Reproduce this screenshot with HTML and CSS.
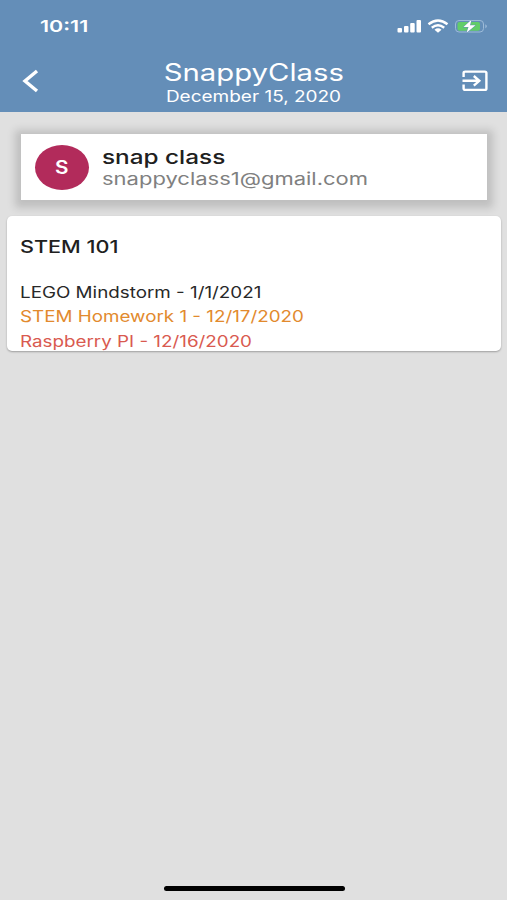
FILE: index.html
```
<!DOCTYPE html>
<html lang="en">
<head>
<meta charset="utf-8">
<title>SnappyClass</title>
<link rel="stylesheet" href="styles.css">
</head>
<body>
<div class="screen">
  <header class="header">
    <div class="status">
      <span class="time">10:11</span>
      <svg class="indicators" width="92" height="16" viewBox="0 0 92 16">
        <g fill="#fff">
          <rect x="0.5" y="9" width="4.5" height="4.5" rx="1"/>
          <rect x="7" y="7" width="4.5" height="6.5" rx="1"/>
          <rect x="13.2" y="4" width="4.5" height="9.5" rx="1"/>
          <rect x="19.5" y="1" width="4.5" height="12.5" rx="1"/>
        </g>
        <g fill="none" stroke="#fff" stroke-width="2.4">
          <path d="M31.5 5.3Q41 -2.3 50.500 5.3"/>
          <path d="M34.800 8.800Q41 3.800 47.200 8.800"/>
        </g>
        <path d="M37.500 10.700Q41 8 44.500 10.700L41 13.700Z" fill="#fff"/>
        <rect x="58.500" y="1.500" width="28" height="11.500" rx="3.500" fill="none" stroke="#9dbbd8" stroke-width="1"/>
        <path d="M88.300 5.200Q91.500 7.200 88.300 9.400Z" fill="#9dbbd8"/>
        <rect x="60.500" y="3" width="22.500" height="8.700" rx="2" fill="#62cd68"/>
        <path d="M74.500 0.800L66.500 8H71.500L69.500 13.800L78.500 6.300H73Z" fill="#fff" stroke="#648eb8" stroke-width="1" paint-order="stroke"/>
      </svg>
    </div>
    <div class="bar">
      <svg class="back" width="18" height="24" viewBox="0 0 18 24"><path d="M16 2L4 12L16 22" fill="none" stroke="#fff" stroke-width="3.400"/></svg>
      <div class="heading">
        <h1 class="title">SnappyClass</h1>
        <p class="date">December 15, 2020</p>
      </div>
      <svg class="exit" width="26" height="22" viewBox="0 0 26 22"><g fill="none" stroke="#fff" stroke-width="2.400"><path d="M1.600 7V3Q1.600 1.600 3.200 1.600H22.800Q24.400 1.600 24.400 3V18.500Q24.400 19.900 22.800 19.900H3.200Q1.600 19.900 1.600 18.500V14.500"/><path d="M0.500 10.800H17M11.800 6L17.300 10.800L11.800 15.600"/></g></svg>
    </div>
  </header>
  <main class="content">
    <section class="profile">
      <div class="avatar"><span>S</span></div>
      <div class="identity">
        <p class="name">snap class</p>
        <p class="email">snappyclass1@gmail.com</p>
      </div>
    </section>
    <section class="course">
      <h2 class="course-title">STEM 101</h2>
      <ul class="tasks">
        <li class="task">LEGO Mindstorm - 1/1/2021</li>
        <li class="task soon">STEM Homework 1 - 12/17/2020</li>
        <li class="task urgent">Raspberry PI - 12/16/2020</li>
      </ul>
    </section>
  </main>
  <div class="home-indicator"></div>
</div>
</body>
</html>
```
FILE: styles.css
```
* { box-sizing: border-box; margin: 0; padding: 0; }
body { font-family: Inter, "Liberation Sans", sans-serif; background: #e0e0e0; }
.screen { width: 507px; height: 900px; display: flex; flex-direction: column; background: #e0e0e0; overflow: hidden; }
.header { height: 112px; flex: none; background: #648eb8; color: #fff; }
.status { height: 52px; display: flex; justify-content: space-between; align-items: flex-start; padding: 16px 18px 0 40px; }
.time { font-size: 16.5px; line-height: 21px; font-weight: 600; transform: scaleX(1.3); transform-origin: left; }
.indicators { margin-top: 3px; }
.bar { display: flex; justify-content: space-between; align-items: flex-start; padding: 6px 19px 0 21px; }
.back { margin-top: 11px; }
.exit { margin-top: 12px; }
.heading { display: flex; flex-direction: column; align-items: center; padding: 1px 0 0 6px; }
.title { font-size: 24px; line-height: 28px; font-weight: 400; transform: scaleX(1.22); }
.date { font-size: 15.5px; line-height: 20px; font-weight: 400; transform: scaleX(1.225); }
.content { flex: 1; padding: 22px 6px 0 7px; }
.profile { height: 66px; margin: 0 14px; display: flex; background: #fff; box-shadow: 0 2px 8px 6px rgba(0,0,0,.15); }
.avatar { width: 54px; height: 45px; margin: 11px 0 0 14px; border-radius: 50%; background: #b22b5b; color: #fff; display: flex; align-items: center; justify-content: center; font-size: 18px; font-weight: 600; }
.avatar span { transform: scaleX(1.15); }
.identity { margin: 11px 0 0 13px; color: #202020; }
.name { font-size: 19px; line-height: 25px; font-weight: 500; width: max-content; transform: scaleX(1.28); transform-origin: left; }
.email { font-size: 17px; line-height: 18px; width: max-content; color: #808080; transform: scaleX(1.293); transform-origin: left; }
.course { position: relative; height: 135px; margin-top: 16px; padding: 20px 13px 0; background: #fff; border-radius: 5px; box-shadow: 0 1px 2px rgba(0,0,0,.3); }
.course-title { width: max-content; font-size: 17px; line-height: 22px; font-weight: 500; color: #202020; transform: scaleX(1.27); transform-origin: left; }
.tasks { list-style: none; margin-top: 23px; }
.task { width: max-content; font-size: 15.5px; line-height: 24.3px; color: #282828; transform: scaleX(1.213); transform-origin: left; }
.soon { color: #e28a2e; }
.urgent { color: #d95a50; }
.home-indicator { flex: none; width: 181px; height: 5px; margin: 0 auto 9px 164px; border-radius: 3px; background: #000; }
```
